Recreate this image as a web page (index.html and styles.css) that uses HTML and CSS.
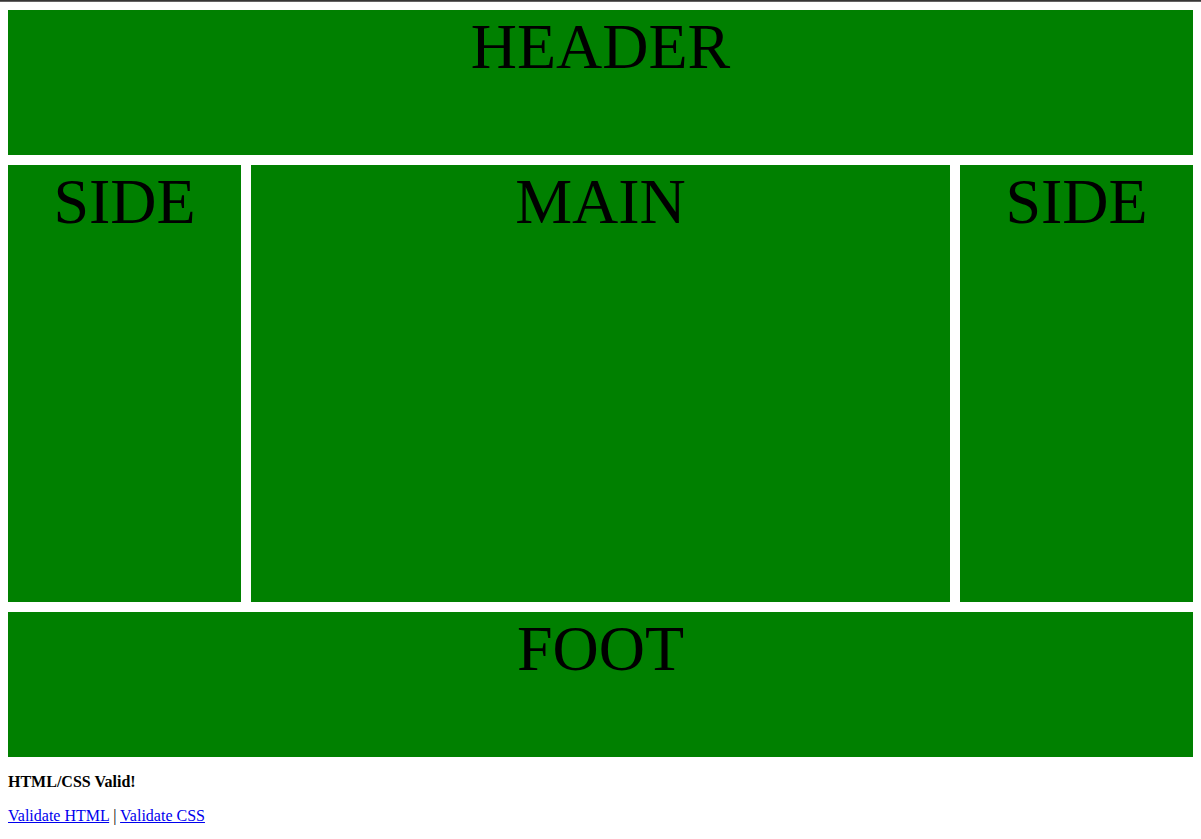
FILE: index.html
```html
<!DOCTYPE html>
<html lang="en" class="page">
<head>
<meta charset="utf-8">
<title>Grid layout</title>
<link rel="stylesheet" href="styles.css">
</head>
<body class="content">
<div class="layout">
  <header class="area header">HEADER</header>
  <aside class="area">SIDE</aside>
  <main class="area">MAIN</main>
  <aside class="area">SIDE</aside>
  <footer class="area footer">FOOT</footer>
</div>
<p class="note"><strong>HTML/CSS Valid!</strong></p>
<p class="note"><a class="link" href="#html">Validate HTML</a> | <a class="link" href="#css">Validate CSS</a></p>
</body>
</html>
```

FILE: styles.css
```css
.page {
  border-top: 1px solid #373535;
  background: #fff;
}

.content {
  margin: 0;
  padding: 8px;
  border-top: 1px solid #646262;
  color: #000;
  font-family: "Liberation Serif", "Times New Roman", serif;
  font-size: 16px;
  line-height: 18px;
}

.layout {
  display: grid;
  grid-template-columns: 1fr 3fr 1fr;
  grid-template-rows: 145px 1fr 145px;
  gap: 10px;
  min-height: 89vh;
}

.area {
  background: #008000;
  font-size: 64px;
  line-height: 73px;
  text-align: center;
}

.header,
.footer {
  grid-column: 1 / -1;
}

.note {
  margin: 16px 0;
}

.link {
  color: #00e;
}
```
